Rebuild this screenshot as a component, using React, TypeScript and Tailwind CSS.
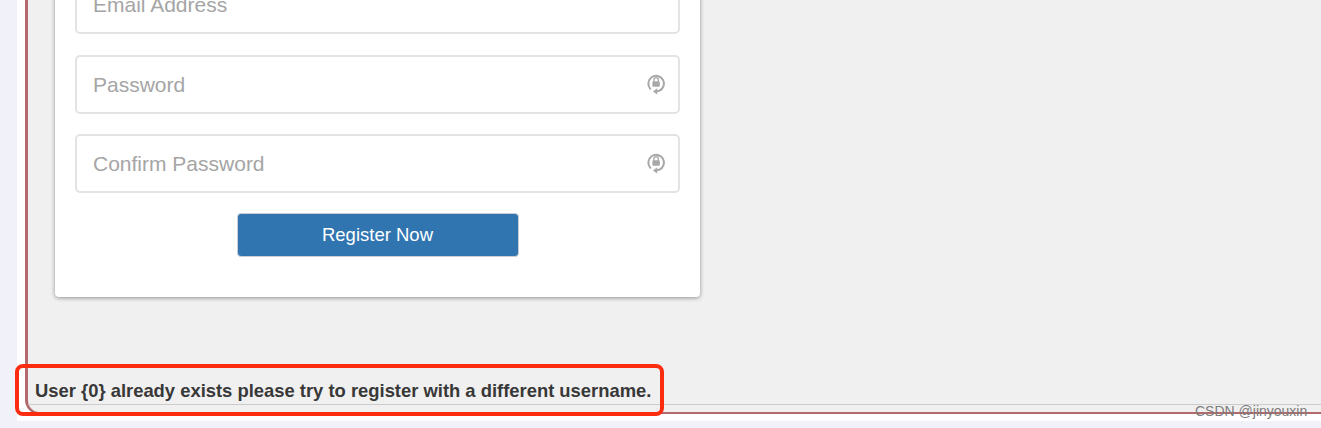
// Registro: parte baja del formulario con el mensaje de usuario repetido.
import { useState } from 'react';

function LockRefreshIcon() {
  return (
    <svg width="20" height="21" viewBox="0 0 20 21" fill="none" className="text-[#a8a8a8]">
      <path
        d="M4.3 14.8A7.8 7.8 0 1 1 13.2 16.8L10.6 17.4"
        stroke="currentColor"
        strokeWidth="2"
        strokeLinecap="round"
      />
      <path d="M11.2 14.3V20.6L6.9 17.6Z" fill="currentColor" />
      <rect x="6.4" y="7.2" width="7.4" height="5.6" rx="0.8" fill="currentColor" />
      <path d="M7.9 7.4V5.9a2.2 2.2 0 0 1 4.4 0v1.5" stroke="currentColor" strokeWidth="1.3" />
    </svg>
  );
}

interface FieldProps {
  placeholder: string;
  type: string;
  lockIcon?: boolean;
  className?: string;
}

function Field({ placeholder, type, lockIcon, className }: FieldProps) {
  const [value, setValue] = useState('');
  return (
    <div
      className={`flex h-[59px] items-center rounded-[5px] border-2 border-[#e3e3e3] bg-white pl-[15px] pr-[12px] ${className ?? ''}`}
    >
      <input
        type={type}
        value={value}
        placeholder={placeholder}
        onChange={(e) => setValue(e.target.value)}
        className="min-w-0 flex-1 bg-transparent pl-px pt-px text-[21px] text-[#555] outline-none placeholder:text-[#a5a5a5]"
      />
      {lockIcon ? <LockRefreshIcon /> : null}
    </div>
  );
}

export default function App() {
  return (
    <div className="relative h-[428px] w-[1321px] overflow-hidden bg-[#f1f2f9] font-['Liberation_Sans',Arial,sans-serif]">
      <div className="ml-[17px] h-[421px] bg-white pl-[8px]">
        <div className="h-[414px] rounded-bl-[14px] border-b-2 border-l-[3px] border-[#b26a6c] bg-[#f0f0f0]">
          <div className="flex h-[405px] flex-col justify-between border-b border-[#cccccc]">
            <div className="ml-[27px] mt-[-25px] h-[322px] w-[645px] rounded-[4px] bg-white px-[21px] pt-0 shadow-[0_1px_4px_rgba(0,0,0,0.4)]">
              <div className="-mx-px">
                <Field placeholder="Email Address" type="email" />
                <Field placeholder="Password" type="password" lockIcon className="mt-[21px]" />
                <Field placeholder="Confirm Password" type="password" lockIcon className="mt-[20px]" />
              </div>
              <div className="mt-[20px] flex justify-center">
                <button
                  type="button"
                  className="h-[44px] w-[282px] rounded-[4px] border border-[#c9ced4] bg-[#3175b0] text-[18.5px] text-white"
                >
                  Register Now
                </button>
              </div>
            </div>
            <p className="mb-[2px] ml-[7px] text-[18.4px] leading-[22px] font-bold text-[#383838]">
              User {'{0}'} already exists please try to register with a different username.
            </p>
          </div>
        </div>
      </div>

      {/* Recuadro rojo de la captura */}
      <div className="pointer-events-none absolute left-[15px] top-[364px] h-[52px] w-[649px] rounded-[8px] border-4 border-[#fb2c10]" />

      {/* Marca de agua */}
      <span className="pointer-events-none absolute left-[1195px] top-[403px] text-[14px] leading-[17px] text-[#7c7c7c]">
        CSDN @jinyouxin
      </span>
    </div>
  );
}
